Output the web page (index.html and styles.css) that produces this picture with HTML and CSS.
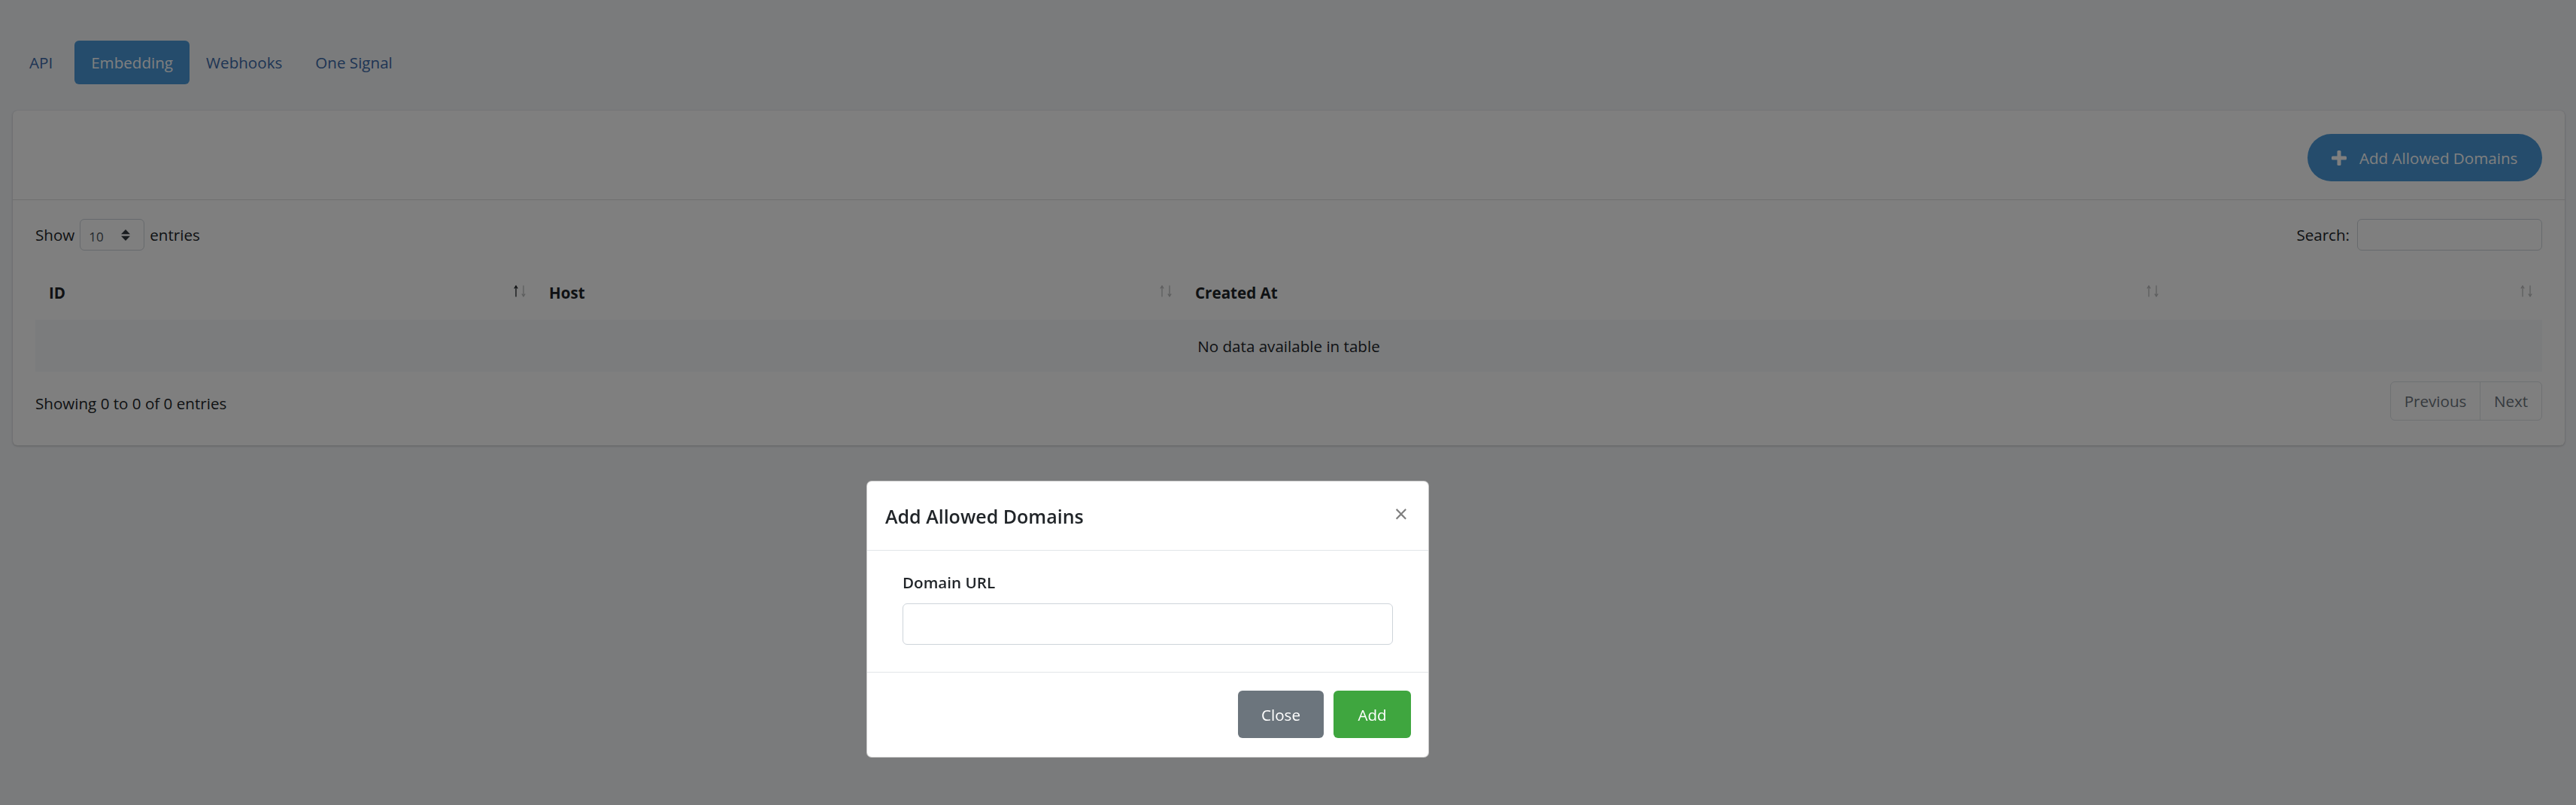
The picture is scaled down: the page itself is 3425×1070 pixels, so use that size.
FILE: index.html
```html
<!DOCTYPE html>
<html lang="en">
<head>
<meta charset="utf-8">
<title>Embedding</title>
<link rel="stylesheet" href="styles.css">
</head>
<body>
<div class="page">
  <nav class="tabs">
    <a class="tab first">API</a>
    <a class="tab active">Embedding</a>
    <a class="tab">Webhooks</a>
    <a class="tab">One Signal</a>
  </nav>

  <section class="card">
    <div class="card-header">
      <button class="btn-add-domains" type="button">
        <svg class="plus" width="20" height="20" viewBox="0 0 20 20"><rect x="7.5" y="0" width="5" height="20" rx="1.5"/><rect x="0" y="7.5" width="20" height="5" rx="1.5"/></svg>
        <span>Add Allowed Domains</span>
      </button>
    </div>
    <div class="card-body">
      <div class="dt-top">
        <div class="dt-length">
          <span>Show</span>
          <div class="select-sm">
            <span class="select-val">10</span>
            <svg class="select-arrows" width="12" height="15" viewBox="0 0 12 15"><path d="M0 6.2 L6 0 L12 6.2 Z M0 8.8 L6 15 L12 8.8 Z"/></svg>
          </div>
          <span>entries</span>
        </div>
        <div class="dt-search">
          <span>Search:</span>
          <div class="search-input"></div>
        </div>
      </div>

      <table class="dt-table">
        <colgroup>
          <col class="c1"><col class="c2"><col class="c3"><col class="c4">
        </colgroup>
        <thead>
          <tr>
            <th><div class="th-in"><span>ID</span><svg class="sort asc" width="17" height="16" viewBox="0 0 17 16"><path class="up" d="M3 1.5 V15.5 M0.8 4.5 L3 1 L5.2 4.5"/><path class="down" d="M13 0.5 V14.5 M10.8 11.5 L13 15 L15.2 11.5"/></svg></div></th>
            <th><div class="th-in"><span>Host</span><svg class="sort" width="17" height="16" viewBox="0 0 17 16"><path class="up" d="M3 1.5 V15.5 M0.8 4.5 L3 1 L5.2 4.5"/><path class="down" d="M13 0.5 V14.5 M10.8 11.5 L13 15 L15.2 11.5"/></svg></div></th>
            <th><div class="th-in"><span>Created At</span><svg class="sort" width="17" height="16" viewBox="0 0 17 16"><path class="up" d="M3 1.5 V15.5 M0.8 4.5 L3 1 L5.2 4.5"/><path class="down" d="M13 0.5 V14.5 M10.8 11.5 L13 15 L15.2 11.5"/></svg></div></th>
            <th><div class="th-in"><span></span><svg class="sort" width="17" height="16" viewBox="0 0 17 16"><path class="up" d="M3 1.5 V15.5 M0.8 4.5 L3 1 L5.2 4.5"/><path class="down" d="M13 0.5 V14.5 M10.8 11.5 L13 15 L15.2 11.5"/></svg></div></th>
          </tr>
        </thead>
        <tbody>
          <tr><td colspan="4" class="empty">No data available in table</td></tr>
        </tbody>
      </table>

      <div class="dt-bottom">
        <div class="dt-info">Showing 0 to 0 of 0 entries</div>
        <div class="pager">
          <span class="pg prev">Previous</span>
          <span class="pg next">Next</span>
        </div>
      </div>
    </div>
  </section>
</div>

<div class="backdrop"></div>

<div class="modal">
  <div class="modal-header">
    <h5 class="modal-title">Add Allowed Domains</h5>
    <span class="modal-close">&times;</span>
  </div>
  <div class="modal-body">
    <label class="field-label">Domain URL</label>
    <div class="field-input"></div>
  </div>
  <div class="modal-footer">
    <button class="btn btn-close" type="button">Close</button>
    <button class="btn btn-ok" type="button">Add</button>
  </div>
</div>
</body>
</html>
```

FILE: styles.css
```css
* { box-sizing: border-box; }

html, body {
  margin: 0;
  padding: 0;
}

body {
  background: #f4f6f9;
  font-family: "Open Sans", "Noto Sans", sans-serif;
  font-size: 20.6px;
  color: #212529;
  width: 3425px;
  height: 1070px;
  overflow: hidden;
}

.page {
  padding: 54px 15px 0 17px;
}

/* tabs */
.tabs {
  display: flex;
  height: 58px;
  margin-bottom: 35px;
}

.tab {
  display: flex;
  align-items: center;
  padding: 0 22px;
  height: 58px;
  color: #3d6aa8;
  border-radius: 6px;
  white-space: nowrap;
}

.tab.first {
  padding-right: 29px;
}

.tab.active {
  background: #4a99d8;
  color: #ffffff;
}

/* card */
.card {
  background: #ffffff;
  border-radius: 6px;
  box-shadow: 0 0 1px rgba(0,0,0,.125), 0 1px 3px rgba(0,0,0,.2);
  height: 445px;
}

.card-header {
  height: 119px;
  padding: 31px 30px 0;
  display: flex;
  justify-content: flex-end;
  align-items: flex-start;
  border-bottom: 1px solid rgba(0,0,0,.125);
}

.btn-add-domains {
  display: flex;
  align-items: center;
  gap: 17px;
  height: 63px;
  width: 312px;
  padding: 0 0 0 32px;
  border: 0;
  border-radius: 32px;
  background: #4a99d8;
  color: #ffffff;
  font-family: inherit;
  font-size: 20.6px;
  white-space: nowrap;
}

.plus { fill: #ffffff; flex: none; }

.card-body {
  padding: 25px 30px 33px;
}

.dt-top {
  display: flex;
  justify-content: space-between;
  align-items: center;
  height: 42px;
}

.dt-length, .dt-search {
  display: flex;
  align-items: center;
  gap: 7px;
}

.select-sm {
  width: 86px;
  height: 42px;
  border: 1px solid #ced4da;
  border-radius: 6px;
  display: flex;
  align-items: center;
  justify-content: space-between;
  padding: 4px 18px 0 11px;
  color: #495057;
  font-size: 17px;
}

.select-arrows { fill: #343a40; margin-top: -3px; }

.search-input {
  width: 246px;
  height: 42px;
  border: 1px solid #ced4da;
  border-radius: 6px;
  margin-left: 3px;
}

/* table */
.dt-table {
  width: 100%;
  margin-top: 20px;
  border-collapse: collapse;
  table-layout: fixed;
}

.c1 { width: 665px; }
.c2 { width: 859px; }
.c3 { width: 1312px; }
.c4 { width: 497px; }

.dt-table th {
  height: 72px;
  padding: 0 12px 0 18px;
  font-weight: 700;
  text-align: left;
}

.th-in {
  display: flex;
  justify-content: space-between;
  align-items: center;
}

.sort { fill: none; stroke-width: 1.3; flex: none; margin-top: -5px; }
.sort .up, .sort .down { stroke: #212529; opacity: .3; }
.sort.asc .up { opacity: 1; }

.dt-table td.empty {
  height: 69px;
  background: #f6f8fb;
  text-align: center;
  padding: 0;
}

/* bottom */
.dt-bottom {
  display: flex;
  justify-content: space-between;
  align-items: flex-start;
  margin-top: 13px;
}

.dt-info {
  padding-top: 15px;
}

.pager {
  display: flex;
  height: 52px;
  border: 1px solid #dee2e6;
  border-radius: 6px;
  color: #6c757d;
}

.pg {
  display: flex;
  align-items: center;
  justify-content: center;
}

.prev { width: 119px; border-right: 1px solid #dee2e6; }
.next { width: 81px; }

/* overlay */
.backdrop {
  position: fixed;
  inset: 0;
  background: rgba(0,0,0,.5);
}

.modal {
  position: fixed;
  left: 1152px;
  top: 639px;
  width: 748px;
  height: 368px;
  background: #ffffff;
  border: 1px solid rgba(0,0,0,.2);
  border-radius: 7px;
  display: flex;
  flex-direction: column;
}

.modal-header {
  height: 92px;
  flex: none;
  display: flex;
  align-items: center;
  justify-content: space-between;
  padding: 0 27px 0 24px;
  border-bottom: 1px solid #e2e5e9;
}

.modal-title {
  margin: 0;
  font-size: 25px;
  font-weight: 600;
  color: #212529;
}

.modal-close {
  font-size: 32px;
  font-weight: 400;
  color: #000;
  opacity: .5;
  line-height: 1;
  margin-top: -6px;
}

.modal-body {
  height: 162px;
  flex: none;
  padding: 26px 47px 0;
  border-bottom: 1px solid #e2e5e9;
}

.field-label {
  display: block;
  font-weight: 600;
  line-height: 32px;
  margin-bottom: 12px;
}

.field-input {
  height: 55px;
  border: 1px solid #ced4da;
  border-radius: 6px;
}

.modal-footer {
  flex: 1;
  display: flex;
  justify-content: flex-end;
  align-items: flex-start;
  gap: 13px;
  padding: 24px 23px 0;
}

.btn {
  height: 63px;
  border: 0;
  border-radius: 6px;
  color: #ffffff;
  font-family: inherit;
  font-size: 20.6px;
  padding: 0;
}

.btn-close { width: 114px; background: #6c757d; }
.btn-ok { width: 103px; background: #3fa63f; }
```
